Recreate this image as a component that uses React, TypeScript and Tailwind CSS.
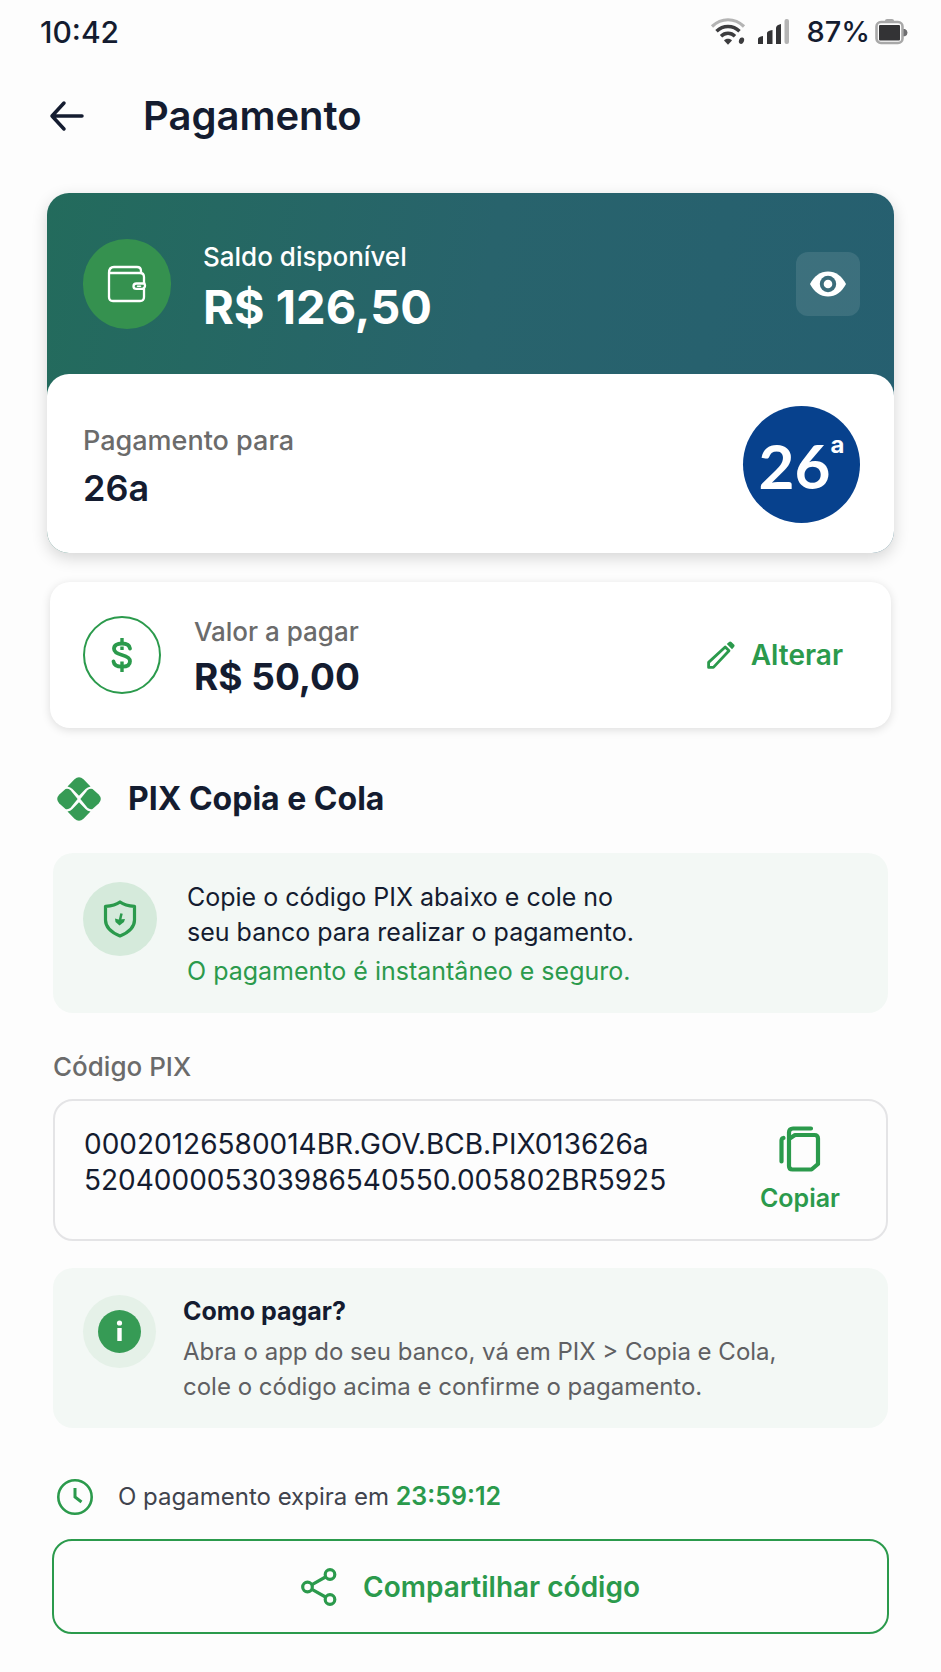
import { useState } from "react";
import type { ReactNode } from "react";

const PIX_CODE = "00020126580014BR.GOV.BCB.PIX013626a\n520400005303986540550.005802BR5925";

function WifiIcon() {
  return (
    <svg width="36" height="28" viewBox="0 0 36 28" fill="none" aria-hidden="true">
      <path d="M2 8.5C11.500-.5 24.500-.5 34 8.500" stroke="#b4b4b4" strokeWidth="3.200" />
      <path d="M6.500 13.300C13 6.800 23 6.800 29.500 13.300" stroke="#3c3c3e" strokeWidth="3.400" />
      <path d="M11 18.200C15 14.200 21 14.200 25 18.200" stroke="#3c3c3e" strokeWidth="3.400" />
      <path d="M14 22.500C15.500 20.200 20.500 20.200 22 22.500L18 26.800Z" fill="#3c3c3e" />
      <ellipse cx="31.500" cy="22.700" rx="2.500" ry="3.300" fill="#3c3c3e" transform="rotate(20 31.500 22.700)" />
    </svg>
  );
}

function SignalIcon() {
  return (
    <svg width="32" height="26" viewBox="0 0 32 26" aria-hidden="true">
      <path d="M0 20q0-2 5-3v8H0z" fill="#333335" />
      <path d="M9 14q0-2 5.500-3v14H9z" fill="#333335" />
      <path d="M18 9q0-3 5-4v20h-5z" fill="#333335" />
      <rect x="26.500" y="0" width="4.500" height="25" rx="2" fill="#b4b4b4" />
    </svg>
  );
}

function BatteryIcon() {
  return (
    <svg width="33" height="26" viewBox="0 0 33 26" fill="none" aria-hidden="true">
      <path d="M10 3V1.500q0-1.500 2-1.500h5q2 0 2 1.500V3z" fill="#a8a8a8" />
      <rect x="1.500" y="3" width="26" height="21" rx="4.500" stroke="#a8a8a8" strokeWidth="2.600" />
      <rect x="4" y="6" width="21" height="15.500" rx="1" fill="#333335" />
      <path d="M28.500 10H30q2.500 1 2.500 3.700T30 17.300h-1.500z" fill="#6e6e70" />
    </svg>
  );
}

function BackIcon() {
  return (
    <svg width="36" height="32" viewBox="0 0 36 32" fill="none" stroke="#141c30" strokeWidth="3.500" strokeLinecap="round" strokeLinejoin="round" aria-hidden="true">
      <path d="M15 3 3 16l12 13M3 16h30" />
    </svg>
  );
}

function WalletIcon() {
  return (
    <svg width="40" height="38" viewBox="0 0 40 38" fill="none" stroke="#fff" strokeWidth="2.300" strokeLinecap="round" strokeLinejoin="round" aria-hidden="true">
      <path d="M2 8v24q0 4 4 4h27q4 0 4-4v-8M37 18v-6q0-4-4-4H2q0-6 5-6h23q4 0 4 4v2" />
      <path d="M37.500 18.500H29.500q-3 0-3 2.700t3 2.700h6q2.500-1 2.500-3.500z" />
      <path d="M30.500 21.200h3" strokeWidth="1.500" />
    </svg>
  );
}

function EyeIcon() {
  return (
    <svg width="36" height="26" viewBox="0 0 36 26" aria-hidden="true">
      <path d="M0 13C4 5 10.500.500 18 .500S32 5 36 13c-4 8-10.500 12.500-18 12.500S4 21 0 13Z" fill="#fff" />
      <circle cx="18" cy="13" r="8.200" fill="#3b6c7a" />
      <circle cx="18" cy="13" r="4.300" fill="#fff" />
    </svg>
  );
}

function DollarIcon() {
  return (
    <svg width="22" height="36" viewBox="0 0 22 36" fill="none" stroke="#2b9a4c" strokeWidth="3.800" strokeLinecap="round" aria-hidden="true">
      <path d="M19 11.500C18.500 8 15.500 6.500 11 6.500 6 6.500 3 8.500 3 11.800c0 3.700 3.500 5 8 6.200s8 2.500 8 6.200c0 3.600-3.200 5.500-8 5.500s-8-1.700-8.500-5.200" />
      <path d="M11 1v6M11 9.500v3.500M11 24.500V35" strokeLinecap="butt" strokeWidth="3.400" />
    </svg>
  );
}

function PencilIcon() {
  return (
    <svg width="28" height="28" viewBox="0 0 28 28" aria-hidden="true">
      <path d="M1.600 26.400v-5L18.200 6l3.800 3.800L6.400 26.400z" fill="none" stroke="#2b9a4c" strokeWidth="2.800" strokeLinejoin="round" />
      <path d="M19.800 3 22 1q1.200-1.200 2.400 0L27 3.600q1.200 1.200 0 2.400L25 8.200z" fill="#2b9a4c" />
    </svg>
  );
}

function PixLogo() {
  return (
    <svg width="44" height="44" viewBox="0 0 44 44" fill="#369b55" aria-hidden="true">
      <path d="M10.500 9.500 17.500 2.300q4.500-4 9 0l7 7.200q-3 .5-5 2.500L22 18.800 15.500 12q-2-2-5-2.500Z" />
      <path d="M10.500 34.500l7 7.200q4.500 4 9 0l7-7.200q-3-.5-5-2.500L22 25.200 15.500 32q-2 2-5 2.500Z" />
      <path d="M8.500 12 2.300 17.500q-4.200 4.500 0 9L8.500 32q3 .7 5-1.300L20.600 22 13.500 13.300q-2-2-5-1.300Z" />
      <path d="M35.500 12l6.200 5.500q4.200 4.500 0 9L35.500 32q-3 .7-5-1.300L23.400 22l7.100-8.700q2-2 5-1.300Z" />
    </svg>
  );
}

function ShieldIcon() {
  return (
    <svg width="34" height="38" viewBox="0 0 34 38" fill="none" stroke="#2b9a4c" strokeWidth="3.200" strokeLinejoin="round" aria-hidden="true">
      <path d="M17 2c4 3 9 4 14.500 4.300V20c0 7-6 12.500-14.500 16C8.500 32.500 2.500 27 2.500 20V6.300C8 6 13 5 17 2Z" />
      <path d="M18.500 13.500 17 20" strokeWidth="2.500" />
      <path d="M12 18.500l3.500 1 6.500-.5-1 3-4.500 3.500-4-3.500z" fill="#2b9a4c" stroke="none" />
    </svg>
  );
}

function CopyIcon() {
  return (
    <svg width="42" height="46" viewBox="0 0 42 46" fill="none" stroke="#2b9a4c" strokeWidth="4.200" strokeLinecap="round" strokeLinejoin="round" aria-hidden="true">
      <path d="M2.500 35.500V14.500q0-2 2-2.500" />
      <path d="M32 2.500H14q-4 0-4 4V40q0 3.500 3.500 3.500h19L39 38V12.500Q39 9 35.500 9H16L10 13" />
    </svg>
  );
}

function InfoIcon() {
  return (
    <svg width="43" height="43" viewBox="0 0 43 43" aria-hidden="true">
      <circle cx="21.500" cy="21.500" r="21.500" fill="#369b55" />
      <circle cx="21.500" cy="13" r="2.600" fill="#fff" />
      <rect x="19.300" y="18" width="4.400" height="13" fill="#fff" />
    </svg>
  );
}

function ClockIcon() {
  return (
    <svg width="36" height="36" viewBox="0 0 36 36" fill="none" stroke="#2b9a4c" aria-hidden="true">
      <circle cx="18" cy="18" r="16.700" strokeWidth="2.600" />
      <path d="M18 9v9l6.500 5" strokeWidth="3" />
    </svg>
  );
}

function ShareIcon() {
  return (
    <svg width="36" height="38" viewBox="0 0 36 38" fill="none" stroke="#2b9a4c" strokeWidth="3.200" aria-hidden="true">
      <circle cx="6.500" cy="19" r="4.800" />
      <circle cx="29" cy="6.500" r="4.800" />
      <circle cx="29" cy="31.500" r="4.800" />
      <path d="M11 16.700 24.500 9M11 21.300 24.500 29" />
    </svg>
  );
}

function NoticeBox({ icon, children }: { icon: ReactNode; children: ReactNode }) {
  return (
    <section className="mx-[53px] flex items-start rounded-[20px] bg-[#f3f8f5] pl-[30px] pr-6 pt-[27px] pb-[24px]">
      {icon}
      <div className="min-w-0 flex-1">{children}</div>
    </section>
  );
}

export default function App() {
  const [visible, setVisible] = useState(true);

  return (
    <div className="min-h-screen bg-[#fdfdfd] pb-9 font-['Inter',sans-serif] text-[#141c30]">
      <div className="flex h-16 items-center justify-between pl-10 pr-[33px]">
        <span className="text-[30px] font-medium">10:42</span>
        <div className="flex items-center">
          <WifiIcon />
          <span className="ml-3">
            <SignalIcon />
          </span>
          <span className="ml-4 mr-[5px] text-[29px] font-medium">87%</span>
          <BatteryIcon />
        </div>
      </div>

      <header className="flex h-[104px] items-center pl-[49px]">
        <button type="button" aria-label="Voltar">
          <BackIcon />
        </button>
        <h1 className="ml-[58px] text-[40px] leading-[48px] font-semibold">Pagamento</h1>
      </header>

      <main>
        <section className="mx-[47px] mt-[25px] rounded-[22px] bg-linear-[100deg] from-[#236b5c] via-[#28636c] via-50% to-[#265f70] shadow-[0_5px_16px_rgba(0,0,0,0.16)]">
          <div className="flex items-center pt-[44px] pb-[43px] pl-9 pr-[34px]">
            <div className="flex h-[90px] w-[88px] shrink-0 items-center justify-center rounded-full bg-[#35914f]">
              <WalletIcon />
            </div>
            <div className="ml-8 flex-1 text-white">
              <p className="text-[26px] leading-[40px] font-medium">Saldo disponível</p>
              <p className="mt-[6px] text-[47px] leading-[48px] font-bold">{visible ? "R$ 126,50" : "R$ ••••"}</p>
            </div>
            <button
              type="button"
              aria-label="Mostrar ou ocultar saldo"
              onClick={() => setVisible(!visible)}
              className="flex size-16 items-center justify-center rounded-xl bg-white/10"
            >
              <EyeIcon />
            </button>
          </div>
          <div className="flex items-center justify-between rounded-[22px] bg-white pt-8 pb-[30px] pl-9 pr-[34px]">
            <div>
              <p className="text-[27px] leading-[40px] font-medium text-[#6b6b6b]">Pagamento para</p>
              <p className="mt-[7px] text-[36px] leading-[40px] font-semibold">26a</p>
            </div>
            <div className="flex size-[117px] items-center justify-center rounded-full bg-[#07418d] font-bold text-white">
              <span className="font-['Lato',sans-serif] text-[62px] leading-[72px]">26</span>
              <span className="mb-10 text-[24px] leading-[32px]">a</span>
            </div>
          </div>
        </section>

        <section className="mx-[50px] mt-[29px] flex items-center rounded-[20px] bg-white pt-[30px] pb-[31px] pl-[33px] pr-[48px] shadow-[0_2px_10px_rgba(0,0,0,0.13)]">
          <div className="flex size-[78px] shrink-0 items-center justify-center rounded-full border-2 border-[#2b9a4c]">
            <DollarIcon />
          </div>
          <div className="ml-[33px] flex-1">
            <p className="text-[26px] leading-[40px] font-medium text-[#6b6b6b]">Valor a pagar</p>
            <p className="mt-[5px] text-[37px] leading-[40px] font-bold">R$ 50,00</p>
          </div>
          <button type="button" className="flex items-center gap-4 text-[28px] font-semibold text-[#2b9a4c]">
            <PencilIcon />
            Alterar
          </button>
        </section>

        <div className="mx-[57px] mt-[49px] mb-8 flex h-11 items-center gap-[27px]">
          <PixLogo />
          <h2 className="text-[32px] leading-[40px] font-bold">PIX Copia e Cola</h2>
        </div>

        <NoticeBox
          icon={
            <div className="mt-[2px] mr-[30px] flex size-[74px] shrink-0 items-center justify-center rounded-full bg-[#d5eadb]">
              <ShieldIcon />
            </div>
          }
        >
          <p className="text-[25px] leading-[35px]">
            Copie o código PIX abaixo e cole no
            <br />
            seu banco para realizar o pagamento.
          </p>
          <p className="mt-[4px] text-[25px] leading-[35px] text-[#2b9a4c]">O pagamento é instantâneo e seguro.</p>
        </NoticeBox>

        <label htmlFor="pix-code" className="mx-[53px] mt-[38px] mb-4 block text-[26px] leading-8 font-medium text-[#6b6b6b]">
          Código PIX
        </label>
        <div className="mx-[53px] flex items-start rounded-[20px] border-2 border-[#e4e4e6] bg-[#fdfdfd] py-[25px] pl-[29px] pr-[46px]">
          <textarea
            id="pix-code"
            readOnly
            rows={2}
            value={PIX_CODE}
            className="block min-w-0 flex-1 resize-none overflow-hidden text-[28px] leading-[36px] outline-none"
          />
          <button type="button" className="flex flex-col items-center gap-[10px] text-[25px] leading-8 font-semibold text-[#2b9a4c]">
            <CopyIcon />
            Copiar
          </button>
        </div>

        <div className="mt-[27px]">
          <NoticeBox
            icon={
              <div className="mr-[27px] flex size-[73px] shrink-0 items-center justify-center rounded-full bg-[#e5f1e8]">
                <InfoIcon />
              </div>
            }
          >
            <h3 className="text-[25px] leading-8 font-bold">Como pagar?</h3>
            <p className="mt-[7px] text-[24px] leading-[35px] text-[#5f6063]">
              Abra o app do seu banco, vá em PIX &gt; Copia e Cola,
              <br />
              cole o código acima e confirme o pagamento.
            </p>
          </NoticeBox>
        </div>

        <div className="mx-[57px] mt-[50px] flex items-center gap-[25px] text-[24px] leading-9 text-[#40434d]">
          <ClockIcon />
          <p>
            O pagamento expira em <time className="text-[25px] font-semibold text-[#2b9a4c]">23:59:12</time>
          </p>
        </div>

        <div className="mx-[52px] mt-6">
          <button
            type="button"
            className="flex h-[95px] w-full items-center justify-center gap-[26px] rounded-[20px] border-2 border-[#2b9a4c] text-[28px] font-semibold text-[#2b9a4c]"
          >
            <ShareIcon />
            Compartilhar código
          </button>
        </div>
      </main>
    </div>
  );
}
